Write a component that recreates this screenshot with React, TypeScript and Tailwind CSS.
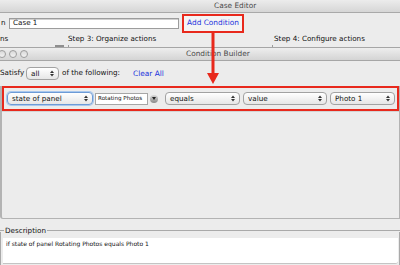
import React from "react";

// Mac-style small popup button (the ⬍ arrows sit at the right)
function PopUp({
  label,
  className,
  focused = false,
}: {
  label: string;
  className: string;
  focused?: boolean;
}) {
  return (
    <div
      className={`flex h-[13px] items-center justify-between rounded-[4px] border bg-gradient-to-b from-white to-[#e6e6e6] pl-[4px] pr-[4px] ${
        focused
          ? "border-[#6d9bd6] shadow-[0_0_0_1px_#a9c8ee]"
          : "border-[#a2a2a2]"
      } ${className}`}
    >
      <span className="leading-none">{label}</span>
      <Updown />
    </div>
  );
}

function Updown() {
  return (
    <svg width="4" height="7" viewBox="0 0 4 7" className="shrink-0">
      <path d="M0 3 L2 0.5 L4 3 Z" fill="#333" />
      <path d="M0 4 L2 6.5 L4 4 Z" fill="#333" />
    </svg>
  );
}

export default function App() {
  return (
    <div className="relative h-[265px] w-[400px] overflow-hidden bg-[#ececec] font-['DejaVu_Sans',sans-serif] text-[7.2px] text-[#111]">
      {/* Case Editor window, behind */}
      <div className="h-[13px] border-b border-[#a9a9a9] bg-gradient-to-b from-[#ececec] to-[#d6d6d6] pl-[214px] text-[7.4px] leading-[12px] text-[#4a4a4a]">
        Case Editor
      </div>
      <div className="flex h-[20px] items-center">
        <span className="w-[9px] pl-[1px]">n</span>
        <div className="flex h-[11px] w-[170px] items-center border border-[#9c9c9c] bg-white pl-[3px] shadow-[inset_0_1px_0_#d0d0d0]">
          Case 1
        </div>
        <div className="ml-[3px] flex h-[19px] w-[62px] items-center justify-center border-2 border-[#e8291c] bg-[#f4f4f4] text-[7.4px] text-[#2233dd]">
          Add Condition
        </div>
      </div>
      <div className="flex h-[12px] items-center">
        <span className="w-[68px]">ns</span>
        <span className="w-[206px]">Step 3: Organize actions</span>
        <span>Step 4: Configure actions</span>
      </div>
      <div className="flex h-[2px]">
        <div className="ml-[55px] h-[2px] w-[9px] bg-[#8f8f8f]" />
        <div className="ml-[4px] h-[2px] w-[1px] bg-[#9a9a9a]" />
        <div className="ml-[203px] h-[2px] w-[1px] bg-[#9a9a9a]" />
      </div>

      {/* Condition Builder window, in front */}
      <div className="flex h-[14px] items-center border-y border-[#a6a6a6] bg-gradient-to-b from-[#eeeeee] to-[#d4d4d4]">
        <div className="-ml-[2px] flex gap-[3px]">
          {[0, 1, 2].map((i) => (
            <div
              key={i}
              className="size-[8px] rounded-full border border-[#9d9d9d] bg-gradient-to-b from-[#d9d9d9] to-[#f2f2f2]"
            />
          ))}
        </div>
        <span className="ml-[158px] text-[7.4px] text-[#4a4a4a]">
          Condition Builder
        </span>
      </div>

      <div className="flex h-[25px] items-center">
        <span className="w-[26px]">Satisfy</span>
        <PopUp label="all" className="w-[33px]" />
        <span className="ml-[3px] w-[71px]">of the following:</span>
        <span className="text-[7.4px] text-[#2233dd]">Clear All</span>
      </div>

      {/* conditions list */}
      <div className="flex h-[133px] flex-col rounded-bl-[3px] border-b border-l-2 border-r border-[#b3b3b3]">
        <div className="flex h-[25px] items-center border-2 border-[#e8291c] pl-[3px]">
          <PopUp label="state of panel" className="w-[86px]" focused />
          <div className="ml-[2px] flex h-[12px] w-[53px] items-center overflow-hidden whitespace-nowrap border border-[#a6a6a6] bg-white pl-[2px] text-[5.6px]">
            Rotating Photos
          </div>
          <div className="ml-[2px] flex size-[8px] items-center justify-center rounded-full bg-gradient-to-b from-[#d8d8d8] to-[#8a8a8a]">
            <svg width="4" height="3" viewBox="0 0 4 3">
              <path d="M0 0 L4 0 L2 3 Z" fill="#222" />
            </svg>
          </div>
          <PopUp label="equals" className="ml-[7px] w-[75px]" />
          <PopUp label="value" className="ml-[3px] w-[84px]" />
          <PopUp label="Photo 1" className="ml-[3px] w-[65px]" />
        </div>
        <div className="h-[1px] bg-[#d4d4d4]" />
      </div>

      {/* Description group */}
      <div className="mt-[10px] flex h-[3px] items-center">
        <div className="h-px w-[4px] bg-[#a9a9a9]" />
        <span className="px-[1px] text-[7.2px] leading-none">Description</span>
        <div className="h-px flex-1 bg-[#a9a9a9]" />
      </div>
      <div className="h-[35px] border-l border-r border-[#a9a9a9] pl-[2px] pt-[6px] pr-[1px]">
        <div className="h-[26px] rounded-br-[3px] border-b border-[#c4c4c4] bg-white pl-[3px] pt-[1px] text-[6px]">
          if state of panel Rotating Photos equals Photo 1
        </div>
      </div>

      {/* red pointer arrow */}
      <svg
        className="absolute left-[207px] top-[33px]"
        width="12"
        height="52"
        viewBox="0 0 12 52"
      >
        <rect x="4.5" y="0" width="3" height="42" fill="#e8291c" />
        <path d="M0 40 L12 40 L6 51 Z" fill="#e8291c" />
      </svg>
    </div>
  );
}
